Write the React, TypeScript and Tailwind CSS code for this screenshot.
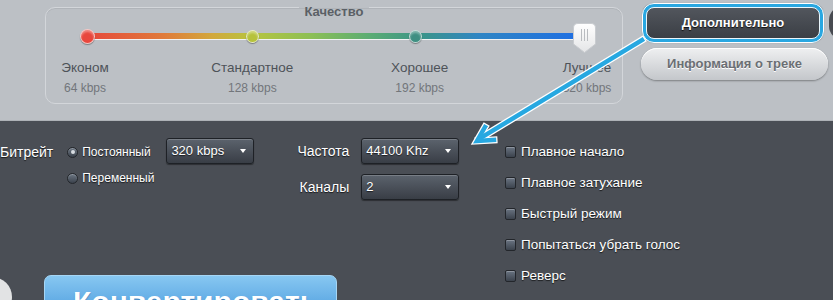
import React from "react";

function Select({ value, w }: { value: string; w: string }) {
  return (
    <div
      className={`${w} h-[26px] shrink-0 flex items-center justify-between rounded-[3px] border border-[#1e2126] bg-gradient-to-b from-[#5c636d] to-[#393e46] pl-[4px] pr-[7px] text-[13px] leading-[16px] text-white shadow-[inset_0_1px_0_rgba(255,255,255,0.18),0_1px_1px_rgba(0,0,0,0.4)] [text-shadow:0_1px_1px_rgba(0,0,0,0.6)]`}
    >
      <span>{value}</span>
      <span className="h-0 w-0 border-x-[3px] border-t-[4px] border-x-transparent border-t-white" />
    </div>
  );
}

function Radio({ checked, label, className }: { checked?: boolean; label: string; className?: string }) {
  return (
    <div className={`flex items-center gap-[4px] ${className ?? ""}`}>
      <span className="flex h-[11px] w-[11px] items-center justify-center rounded-full border border-[#23262b] bg-gradient-to-b from-[#6d7784] to-[#3b424c] shadow-[inset_0_1px_0_rgba(255,255,255,0.25)]">
        {checked && <span className="h-[4px] w-[4px] rounded-full bg-[#d9dde2]" />}
      </span>
      <span className="text-[12px] leading-[14px] text-white [text-shadow:0_1px_1px_rgba(0,0,0,0.7)]">{label}</span>
    </div>
  );
}

function Check({ label }: { label: string }) {
  return (
    <div className="flex h-[16px] items-center gap-[5px]">
      <span className="h-[12px] w-[11px] rounded-[2px] border border-[#23262b] bg-gradient-to-b from-[#6a7482] to-[#3c434d] shadow-[inset_0_1px_0_rgba(255,255,255,0.25)]" />
      <span className="text-[13.5px] leading-[16px] text-white [text-shadow:0_1px_1px_rgba(0,0,0,0.7)]">{label}</span>
    </div>
  );
}

function Level({ name, rate }: { name: string; rate: string }) {
  return (
    <div className="flex w-[76px] flex-col items-center whitespace-nowrap">
      <span className="text-[13.5px] leading-[16px] text-[#4e5359]">{name}</span>
      <span className="mt-[5px] text-[12px] leading-[14px] text-[#72767b]">{rate}</span>
    </div>
  );
}

function Dot({ color, size }: { color: string; size: string }) {
  return (
    <span
      className={`relative z-10 shrink-0 ${size} rounded-full border border-white/70 ${color} shadow-[0_1px_1px_rgba(0,0,0,0.35),inset_0_2px_2px_rgba(255,255,255,0.35)]`}
    />
  );
}

export default function App() {
  return (
    <div className="relative h-[300px] w-[833px] overflow-hidden font-['Liberation_Sans',Arial,sans-serif]">
      {/* top area */}
      <div className="flex h-[121px] items-start bg-[#bcc0c5] shadow-[inset_0_-1px_0_#aeb2b7]">
        <fieldset className="ml-[45px] mt-[-5px] h-[109px] w-[578px] shrink-0 rounded-[10px] border border-[#d3d6da] shadow-[inset_0_1px_0_#b0b4b9]">
          <legend className="mx-auto px-[6px] pt-[10px] text-[13px] font-bold leading-[14px] text-[#5b6066]">
            Качество
          </legend>
          <div className="relative ml-[34px] mt-[9px] flex h-[16px] w-[516px] items-center justify-between">
            <div className="absolute left-[4px] right-[18px] top-[5px] h-[6px] rounded-full bg-[linear-gradient(to_right,#e6463c_0%,#e07a3a_16%,#d2a83c_26%,#b7c43f_34%,#8cbf55_46%,#5aac74_58%,#3c9588_68%,#2f85c4_80%,#1f6fe3_100%)] shadow-[0_1px_0_rgba(255,255,255,0.8)]" />
            <Dot color="bg-[#e8473d]" size="h-[15px] w-[15px]" />
            <Dot color="bg-[#b6c23c]" size="h-[13px] w-[13px]" />
            <Dot color="bg-[#3e8f82]" size="h-[13px] w-[13px]" />
            <svg className="relative z-10 mt-[3px] shrink-0" width="23" height="30" viewBox="0 0 23 30">
              <defs>
                <linearGradient id="hg" x1="0" y1="0" x2="0" y2="1">
                  <stop offset="0" stopColor="#ffffff" />
                  <stop offset="1" stopColor="#e4e5e7" />
                </linearGradient>
              </defs>
              <path
                d="M5,0.5 H18 Q22.5,0.5 22.5,5 V21 L11.5,29.5 L0.5,21 V5 Q0.5,0.5 5,0.5 Z"
                fill="url(#hg)"
                stroke="#c9ccd0"
                strokeWidth="1"
              />
              <path d="M8.5,6 V18 M11.5,6 V18 M14.5,6 V18" stroke="#b9bcc0" strokeWidth="1" />
            </svg>
          </div>
          <div className="mt-[16px] flex justify-between pl-[1px] mr-[-3px]">
            <Level name="Эконом" rate="64 kbps" />
            <Level name="Стандартное" rate="128 kbps" />
            <Level name="Хорошее" rate="192 kbps" />
            <Level name="Лучшее" rate="320 kbps" />
          </div>
        </fieldset>

        <div className="ml-[18px] flex w-[187px] shrink-0 flex-col">
          <div className="ml-[1px] mt-[3px] h-[40px] w-[182px] rounded-[12px] border border-white bg-[#29a7e1] p-[3px] shadow-[0_0_1px_rgba(0,0,0,0.3)]">
            <div className="flex h-full items-center justify-center rounded-[8px] border border-[#eaf6fc] bg-gradient-to-b from-[#52565d] to-[#3b3f45] text-[13px] font-bold text-white [text-shadow:0_1px_1px_rgba(0,0,0,0.8)]">
              Дополнительно
            </div>
          </div>
          <div className="mt-[5px] flex h-[32px] w-[187px] items-center justify-center rounded-full bg-gradient-to-b from-[#eff0f1] to-[#c4c7cb] text-[13px] font-bold text-[#6b6f74] shadow-[0_1px_2px_rgba(0,0,0,0.35),inset_0_1px_0_#fff] [text-shadow:0_1px_0_#fff]">
            Информация о треке
          </div>
        </div>
        <div className="ml-[1px] mt-[6px] h-[34px] w-[20px] shrink-0 rounded-l-[14px] bg-[#484b51]" />
      </div>

      {/* bottom area */}
      <div className="flex h-[179px] bg-[#4a4e55]">
        <div className="flex w-[505px] shrink-0 flex-col">
          <div className="flex items-start pt-[17px]">
            <div className="flex items-start">
              <span className="mt-[6px] text-[14px] leading-[16px] text-white [text-shadow:0_1px_1px_rgba(0,0,0,0.7)]">
                Битрейт
              </span>
              <div className="ml-[14px] flex flex-col">
                <Radio checked label="Постоянный" className="mt-[7px]" />
                <Radio label="Переменный" className="mt-[12px]" />
              </div>
              <div className="ml-[12px]">
                <Select value="320 kbps" w="w-[88px]" />
              </div>
            </div>
            <div className="ml-[43px] grid grid-cols-[auto_auto] items-center gap-x-[12px] gap-y-[10px]">
              <span className="text-right text-[14px] leading-[16px] text-white [text-shadow:0_1px_1px_rgba(0,0,0,0.7)]">
                Частота
              </span>
              <Select value="44100 Khz" w="w-[98px]" />
              <span className="text-right text-[14px] leading-[16px] text-white [text-shadow:0_1px_1px_rgba(0,0,0,0.7)]">
                Каналы
              </span>
              <Select value="2" w="w-[98px]" />
            </div>
          </div>
          <div className="mt-[75px] flex items-start">
            <div className="ml-[-28px] mt-[2px] h-[40px] w-[40px] shrink-0 rounded-full bg-[#e2e3e4]" />
            <div className="ml-[32px] h-[40px] w-[293px] shrink-0 overflow-hidden rounded-t-[7px] border border-[#a6d6f5] bg-gradient-to-b from-[#87c7f1] to-[#4f9fdf] pl-[28px] pt-[11px] text-[30px] font-bold leading-[30px] text-white [text-shadow:0_1px_1px_rgba(30,80,140,0.6)]">
              Конвертировать
            </div>
          </div>
        </div>
        <div className="flex flex-col gap-[15px] pt-[23px]">
          <Check label="Плавное начало" />
          <Check label="Плавное затухание" />
          <Check label="Быстрый режим" />
          <Check label="Попытаться убрать голос" />
          <Check label="Реверс" />
        </div>
      </div>

      {/* callout arrow */}
      <svg className="pointer-events-none absolute left-0 top-0" width="833" height="300" viewBox="0 0 833 300">
        <g fill="none" strokeLinejoin="miter" strokeLinecap="square">
          <path d="M642,40 L479,139" stroke="#ffffff" strokeWidth="7" />
          <path d="M485,127 L477,141 L494,140" stroke="#ffffff" strokeWidth="7" />
          <path d="M642,40 L479,139" stroke="#27a8e1" strokeWidth="4.5" />
          <path d="M485,127 L477,141 L494,140" stroke="#27a8e1" strokeWidth="4.5" />
        </g>
      </svg>
    </div>
  );
}
